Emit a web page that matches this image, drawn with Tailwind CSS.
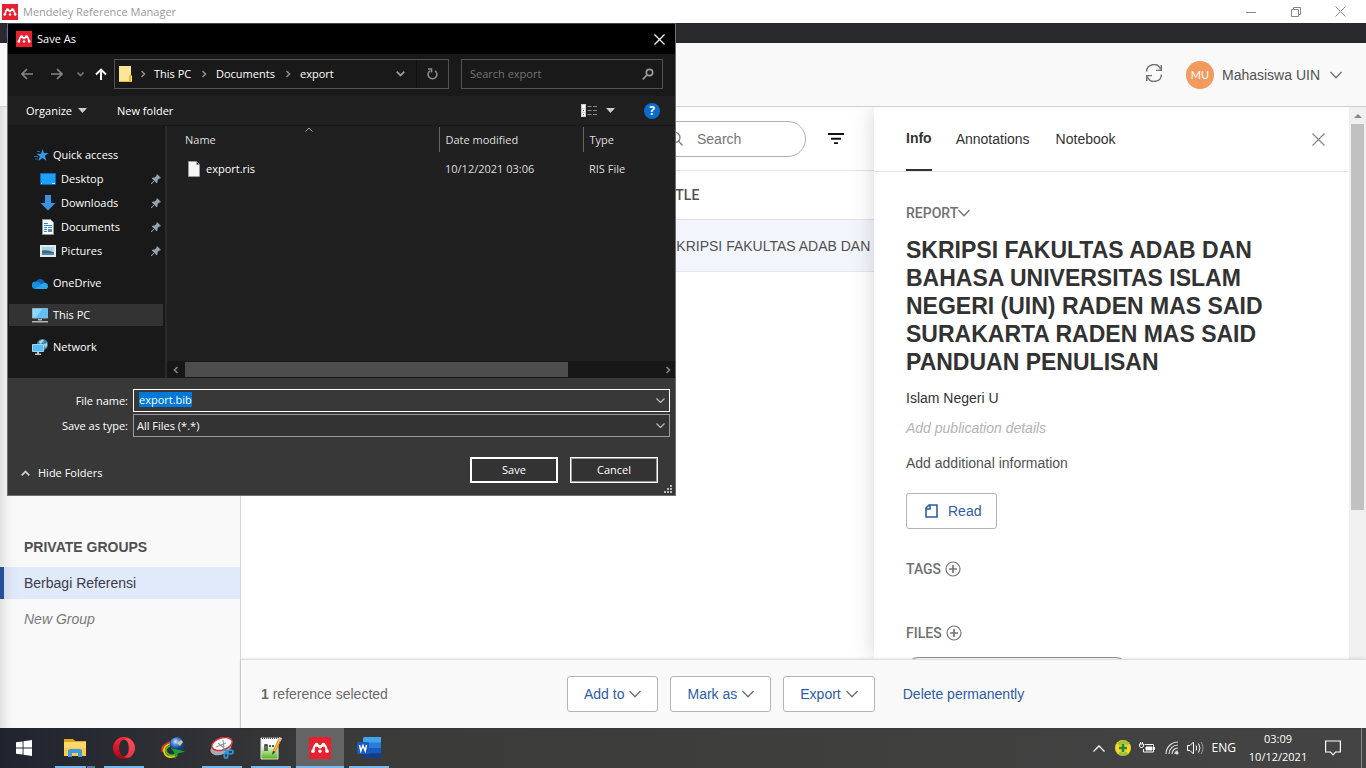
<!DOCTYPE html>
<html lang="en">
<head>
<meta charset="utf-8">
<title>Mendeley Reference Manager</title>
<script src="https://cdn.jsdelivr.net/npm/@tailwindcss/browser@4"></script>
</head>
<body class="relative flex h-screen flex-col overflow-hidden bg-white font-['Liberation_Sans',Arial,sans-serif] text-sm text-[#505050]">

<svg class="hidden" aria-hidden="true">
  <symbol id="mendeley" viewBox="0 0 22 22">
    <path fill="#e9202f" d="M0 0h22v22H0z"/>
    <path fill="none" stroke="#fff" stroke-width="2.200" d="M4.600 13.500Q4.600 8.500 7.500 7.800L11 10l3.500-2.200q2.900.7 2.900 5.700"/>
    <g fill="#fff"><circle cx="7.600" cy="7.700" r="2"/><circle cx="14.400" cy="7.700" r="2"/><circle cx="11" cy="9.700" r="1.700"/><circle cx="3.900" cy="14.300" r="1.800"/><circle cx="11" cy="14.300" r="1.700"/><circle cx="18.100" cy="14.300" r="1.800"/></g>
  </symbol>
  <symbol id="chev" viewBox="0 0 12 8"><path fill="none" stroke="currentColor" stroke-width="1.300" d="M.5 1 6 6.800 11.500 1"/></symbol>
  <symbol id="crumb" viewBox="0 0 6 8"><path fill="none" stroke="currentColor" stroke-width="1.600" d="M1.500 1 4.500 4l-3 3"/></symbol>
  <symbol id="pin" viewBox="0 0 10 10"><path fill="#95a1ab" d="M6 0l4 4-1.200.6-.6-.2-1.700 1.800.1 2-1 1L3.400 7 .8 10H0v-.8L3 6.600.8 4.400l1-1 2 .1 1.800-1.700-.2-.6z"/></symbol>
  <symbol id="plus" viewBox="0 0 16 16"><g fill="none" stroke="#757575" stroke-width="1.200"><circle cx="8" cy="8" r="7"/><path stroke-width="1.700" d="M8 4v8M4 8h8"/></g></symbol>
</svg>

<!-- window title bar -->
<header class="flex h-[23px] shrink-0 items-center bg-white font-['Open_Sans',sans-serif] text-[11px] text-[#999]">
  <svg class="ml-0.5 size-4"><use href="#mendeley"/></svg>
  <span class="ml-[5px] grow">Mendeley Reference Manager</span>
  <button class="flex w-[45px] justify-center" aria-label="Minimize"><svg width="10" height="10"><path stroke="#888" d="M0 5.500h10"/></svg></button>
  <button class="flex w-[45px] justify-center" aria-label="Restore"><svg width="10" height="10" fill="none" stroke="#888"><path d="M.5 2.500h7v7h-7zM2.500 2.500v-2h7v7h-2"/></svg></button>
  <button class="mr-[3px] flex w-[45px] justify-center" aria-label="Close"><svg width="11" height="11"><path stroke="#888" d="M.5.5l10 10M10.500.5l-10 10"/></svg></button>
</header>
<div class="flex h-5 shrink-0 bg-[#292a2e] pt-[5px] pl-1.5"><i class="block h-[9px] w-1 bg-[#2b2d94]"></i></div>

<!-- account bar -->
<div class="flex h-16 shrink-0 items-center justify-end border-b border-[#cfcfcf] bg-[#f9f9f9] pr-6">
  <button class="mr-[23px] mb-1" aria-label="Sync"><svg width="18" height="18" viewBox="0 0 18 18"><g fill="none" stroke="#6f7277" stroke-width="1.400"><path d="M1.500 7.500A7.300 7.300 0 0 1 15.500 5M16.500 10.500A7.300 7.300 0 0 1 2.500 13"/></g><path fill="#6f7277" d="M17 1v6h-6v-1.300h4.500V1zM1 17v-6h6v1.300H2.500V17z"/></svg></button>
  <button class="flex items-center">
    <span class="flex size-7 items-center justify-center rounded-full bg-[#f29a5e] font-['Lato',sans-serif] text-[11px] text-white">MU</span>
    <span class="ml-2">Mahasiswa UIN</span>
    <svg class="ml-2.5 h-2 w-3 text-[#707070]"><use href="#chev"/></svg>
  </button>
</div>

<main class="flex min-h-0 flex-1">
  <!-- library sidebar -->
  <nav class="flex w-[241px] shrink-0 flex-col justify-end border-r border-[#d6d6d6] bg-[#f9f9f9] pb-[99px] shadow-[inset_14px_0_14px_-12px_rgba(0,0,0,0.16)]">
    <h2 class="pl-6 leading-5 font-bold">PRIVATE GROUPS</h2>
    <a href="#berbagi" class="mt-2.5 flex h-8 items-center border-l-4 border-[#254f98] bg-[#e0eafa] pl-5 text-[#3c3c46] shadow-[inset_14px_0_14px_-12px_rgba(0,0,0,0.1)]">Berbagi Referensi</a>
    <a href="#new" class="mt-2.5 pl-6 leading-5 text-[#7a7a7a] italic">New Group</a>
  </nav>

  <div class="flex min-w-0 flex-1 flex-col">
    <div class="flex min-h-0 flex-1 overflow-hidden">
      <!-- reference list -->
      <section class="min-w-0 flex-1 overflow-hidden">
        <div class="flex h-[63px] items-center justify-end pr-[30px]">
          <label class="flex h-9 w-[150px] items-center rounded-full border border-[#b0b0b0] pl-3">
            <svg class="shrink-0" width="14" height="14" fill="none" stroke="#757575" stroke-width="1.200"><circle cx="6" cy="5.500" r="5"/><path d="M9.500 9l4 4.500"/></svg>
            <input type="text" aria-label="Search" placeholder="Search" class="ml-3.5 w-24 outline-none placeholder:text-[#757575]">
          </label>
          <button class="ml-[22px]" aria-label="Filter"><svg width="16" height="11"><path fill="#111" d="M0 0h16v2H0zM3 4.700h10v2H3zM6 9.300h4v1.700H6z"/></svg></button>
        </div>
        <table class="w-full table-fixed text-left whitespace-nowrap">
          <thead><tr class="h-[49px] border-y border-[#e3e3e3] font-['Roboto',sans-serif]"><th class="w-[422px]"></th><th class="font-medium">TITLE</th></tr></thead>
          <tbody><tr class="h-[52px] border-b border-[#e3e6ec] bg-[#f2f6fc]"><td></td><td class="overflow-hidden pl-1">SKRIPSI FAKULTAS ADAB DAN</td></tr></tbody>
        </table>
      </section>

      <!-- details panel -->
      <aside class="flex w-[475px] shrink-0 flex-col bg-white shadow-[0_0_22px_rgba(0,0,0,0.16)]">
        <div class="flex h-[65px] shrink-0 items-start border-b border-[#e6e6e6] pr-6 pl-8 text-[#323232]">
          <button class="h-16 border-b-2 border-[#323232] font-bold">Info</button>
          <button class="ml-6 h-16">Annotations</button>
          <button class="ml-[26px] h-16">Notebook</button>
          <button class="ml-auto h-16" aria-label="Close panel"><svg width="13" height="13"><path stroke="#888" stroke-width="1.300" d="M.5.5l12 12M12.500.5l-12 12"/></svg></button>
        </div>
        <div class="flex flex-col items-start pt-[31px] pr-8 pl-8">
          <button class="flex items-center font-['Roboto',sans-serif] leading-5 font-medium text-[#707070]">REPORT<svg class="h-2 w-3"><use href="#chev"/></svg></button>
          <h1 class="mt-[13px] pr-3 text-[23px] leading-7 font-bold text-[#323232]">SKRIPSI FAKULTAS ADAB DAN BAHASA UNIVERSITAS ISLAM NEGERI (UIN) RADEN MAS SAID SURAKARTA RADEN MAS SAID PANDUAN PENULISAN</h1>
          <p class="mt-3 leading-5 text-[#323232]">Islam Negeri U</p>
          <button class="mt-2.5 leading-5 text-[#b3b3b3] italic">Add publication details</button>
          <button class="mt-[15px] leading-5">Add additional information</button>
          <button class="mt-5 flex h-9 items-center rounded-[3px] border border-[#b5b5b5] px-[15px] text-[#2e5ca8]"><svg class="mr-2.5 ml-[3px]" width="13" height="14" fill="none" stroke="#2e5ca8" stroke-width="1.600"><path d="M4 1H12v12H1V4zM5 1v4H1"/></svg>Read</button>
          <button class="mt-[30px] flex items-center gap-1 font-['Roboto',sans-serif] leading-5 font-medium text-[#707070]">TAGS <svg class="size-4"><use href="#plus"/></svg></button>
          <button class="mt-11 flex items-center gap-1 font-['Roboto',sans-serif] leading-5 font-medium text-[#707070]">FILES <svg class="size-4"><use href="#plus"/></svg></button>
          <div class="mt-3.5 h-8 w-[222px] rounded-xl border border-[#8f8f8f]"></div>
        </div>
      </aside>
      <div class="flex w-[17px] shrink-0 flex-col items-center bg-[#f0f0f0] pt-[7px]">
        <svg width="8" height="4"><path fill="#8a8a8a" d="M4 0l4 4H0z"/></svg>
        <div class="mt-1.5 h-[386px] w-[13px] bg-[#c1c1c1]"></div>
      </div>
    </div>

    <!-- selection actions -->
    <footer class="relative flex h-[69px] shrink-0 items-center border-t border-[#dedede] bg-[#f9f9f9] pl-5 text-[#2e5ca8] shadow-[0_0_3px_rgba(0,0,0,0.15)]">
      <p class="w-[306px] text-[#6b6b6b]"><b>1</b> reference selected</p>
      <button class="flex h-9 items-center gap-[5px] rounded-[3px] border border-[#b5b5b5] bg-white px-4">Add to<svg class="h-2 w-3 text-[#707070]"><use href="#chev"/></svg></button>
      <button class="ml-3 flex h-9 items-center gap-[5px] rounded-[3px] border border-[#b5b5b5] bg-white px-4">Mark as<svg class="h-2 w-3 text-[#707070]"><use href="#chev"/></svg></button>
      <button class="ml-3 flex h-9 items-center gap-[5px] rounded-[3px] border border-[#b5b5b5] bg-white px-4">Export<svg class="h-2 w-3 text-[#707070]"><use href="#chev"/></svg></button>
      <button class="ml-7">Delete permanently</button>
    </footer>
  </div>
</main>

<!-- Windows taskbar -->
<div class="flex h-10 shrink-0 items-stretch gap-px bg-linear-to-r from-[#20242f] via-[#3a3a39] via-25% to-[#444] font-['Open_Sans',sans-serif] text-[11px] text-white">
  <button class="mr-0.5 flex w-12 items-center justify-center" aria-label="Start"><svg width="16" height="16" fill="#fff"><path d="M0 2.300l6.600-.9v6.200H0zM7.500 1.200 16 0v7.600H7.500zM0 8.400h6.600v6.200L0 13.700zM7.500 8.400H16V16l-8.500-1.200z"/></svg></button>
  <button class="relative flex w-12 items-center justify-center" aria-label="File Explorer">
    <svg width="22" height="18"><path fill="#e5a51c" d="M0 0h9l2 2h11v5H0z"/><path fill="#ffd76a" d="M0 3h22v14H0z"/><path fill="#ffcb4f" d="M0 9h22v8H0z"/><path fill="#3b9ce4" d="M4 11l2-1h10l2 1v7h-4v-4H8v4H4z"/></svg>
    <i class="absolute right-[13px] bottom-0 left-1 h-0.5 bg-[#76b9ed]"></i><i class="absolute right-1 bottom-0 h-0.5 w-2 bg-[#567c9b]"></i></button>
  <button class="relative flex w-12 items-center justify-center" aria-label="Opera">
    <svg width="22" height="22"><defs><linearGradient id="op" x2="0" y2="1"><stop stop-color="#ff2b3c"/><stop offset="1" stop-color="#b10015"/></linearGradient></defs><path fill="url(#op)" fill-rule="evenodd" d="M11 0a11 11 0 1 1 0 22 11 11 0 0 1 0-22zm0 2.500C8 2.500 6.200 6.500 6.200 11s1.800 8.500 4.800 8.500 4.800-4 4.800-8.500S14 2.500 11 2.500z"/><path fill="#ff6a6a" d="M11 2.500c2-2 5-1.600 7 .2 5.500 5 5.300 12.500 0 16.700-2 1.800-5 2-7 .1 3 0 4.800-4 4.800-8.500S14 2.500 11 2.500z" opacity=".55"/></svg>
    <i class="absolute inset-x-1 bottom-0 h-0.5 bg-[#76b9ed]"></i></button>
  <button class="flex w-12 items-center justify-center" aria-label="Download Manager">
    <svg width="24" height="22"><defs><radialGradient id="gl" cx=".4" cy=".3"><stop stop-color="#d5ecff"/><stop offset=".4" stop-color="#5794e8"/><stop offset="1" stop-color="#153b8b"/></radialGradient></defs><g fill="none" stroke-width="1.800"><path stroke="#e8322a" d="M10 5C2 7 0 11 1.500 15"/><path stroke="#ffc800" d="M10 6.500C3 8.500 1.500 13 4 17s8 4 12 1"/><path stroke="#3fc62c" d="M10 8.500C5 10 3.500 13 6 16s6 3 9 1"/></g><circle cx="16" cy="7.500" r="7.300" fill="url(#gl)"/><path fill="#d2cf74" d="M16 6l4-3 2 2-3 4z"/><path fill="#19a52b" d="M10 11l14 3.500-7 2-3 5.500-.5-6z"/></svg></button>
  <button class="relative flex w-12 items-center justify-center" aria-label="Snipping Tool">
    <svg width="24" height="22"><ellipse cx="11" cy="11" rx="11" ry="6.500" fill="#a9adb2" transform="rotate(-22 11 11)"/><ellipse cx="12" cy="7" rx="10.500" ry="6" fill="#fff" stroke="#d6323a" stroke-width="1.500" transform="rotate(-18 12 7)"/><path fill="none" stroke="#8f969c" stroke-width="1.100" d="M13 3l1 8M6 10l10-4M8 6l7 6"/><g fill="none" stroke="#2d93d2" stroke-width="1.800"><ellipse cx="20.500" cy="15" rx="2.600" ry="1.800"/><ellipse cx="16" cy="18.500" rx="1.800" ry="2.600"/><path d="M13 12l5 3"/></g></svg>
    <i class="absolute inset-x-1 bottom-0 h-0.5 bg-[#76b9ed]"></i></button>
  <button class="relative flex w-12 items-center justify-center" aria-label="Notepad++">
    <svg width="22" height="24"><defs><linearGradient id="np" x2="0" y2="1"><stop offset=".35" stop-color="#fafafa"/><stop offset="1" stop-color="#4fb60a"/></linearGradient></defs><path fill="url(#np)" stroke="#ddd" d="M1 2h17v21H1z"/><path stroke="#555" stroke-dasharray="1 1" stroke-width="2" d="M2 2h15"/><path fill="none" stroke="#222" stroke-width="1.300" d="M5 15V9h2v6M9 10h2M12 10h2"/><path stroke="#d98b1c" stroke-width="3" d="M20 3l-6 13"/><path stroke="#ffd75a" d="M19.500 4l-5 11"/><path fill="#e5bcbc" d="M19 1l3 1-1 3-3-1z"/><path fill="#222" d="M13 15l2 1-3 3z"/></svg>
    <i class="absolute inset-x-1 bottom-0 h-0.5 bg-[#76b9ed]"></i></button>
  <button class="relative flex w-12 items-center justify-center bg-[#646464]" aria-label="Mendeley">
    <svg class="size-[22px]"><use href="#mendeley"/></svg>
    <i class="absolute inset-x-0 bottom-0 h-0.5 bg-[#76b9ed]"></i></button>
  <button class="relative flex w-12 items-center justify-center" aria-label="Word">
    <svg width="24" height="22"><path fill="#41a5ee" d="M6 1.500Q6 0 7.500 0H24v6H6z"/><path fill="#2b7cd3" d="M6 5.500h18V11H6z"/><path fill="#185abd" d="M6 11h18v5.500H6z"/><path fill="#103f91" d="M6 16.500h18V21H7q-1 0-1-1z"/><rect y="5" width="12" height="12" rx="1" fill="#185abd"/><path fill="none" stroke="#fff" stroke-width="1.400" d="M2.500 8l1.300 6L6 8.500 8.200 14l1.300-6"/></svg>
    <i class="absolute inset-x-1 bottom-0 h-0.5 bg-[#76b9ed]"></i></button>

  <div class="ml-auto flex items-center">
    <svg width="12" height="7" fill="none" stroke="#fff" stroke-width="1.300"><path d="M.5 6.500 6 1l5.500 5.500"/></svg>
    <svg class="ml-2.5" width="16" height="16"><circle cx="8" cy="8" r="8" fill="#f7d52b"/><path fill="#46b14c" d="M2 3.500A8 8 0 0 1 14.500 3.500L12 5.500a5 5 0 0 0-7 0zM3 14.500 5 11.500a5 5 0 0 0 6 0l2 2.500a8 8 0 0 1-10 .5z" opacity=".5"/><path stroke="#1f8a3a" stroke-width="2.600" d="M8 4v8M4 8h8"/></svg>
    <svg class="ml-2" width="16" height="12" fill="none" stroke="#fff"><path d="M5.500 2.500h9v7.500h-10V7M1.500 0v2M3.500 0v2M.5 2h4v2L3.500 5.500h-2L.5 4z"/><path fill="#fff" d="M7 5h6v3H7zM15 5.500h1v2h-1z"/></svg>
    <svg class="ml-2.5" width="14" height="14" fill="none" stroke="#ddd" stroke-width="1.200"><path d="M1 13A12 12 0 0 1 13 1M4 13a9 9 0 0 1 9-9M7 13a6 6 0 0 1 6-6M10 13a3 3 0 0 1 3-3"/><circle cx="12" cy="12" r="1" fill="#fff"/></svg>
    <svg class="ml-2" width="17" height="14" fill="none" stroke="#fff"><path d="M.5 4.500H3L6.500 1v12L3 9.500H.5zM9 4.500q1.500 2.500 0 5M11.500 2.500q3 4.500 0 9"/><path stroke="#999" d="M14 1q4 6 0 12"/></svg>
    <span class="ml-2 text-xs">ENG</span>
    <time class="ml-3 w-[60px] text-center leading-[18px] whitespace-nowrap">03:09<br>10/12/2021</time>
    <svg class="ml-[17px]" width="16" height="16" fill="none" stroke="#fff" stroke-width="1.200"><path d="M.6 1h14.800v11h-4.900L8 14.800 5.500 12H.6z"/></svg>
    <i class="mr-1 ml-5 h-10 w-px bg-[#8a8a8a]"></i>
  </div>
</div>

<!-- Save As window floating above the app -->
<form role="dialog" aria-label="Save As" class="absolute top-[23px] left-[7px] flex w-[669px] flex-col border border-[#6e6e6e] border-t-[#434343] bg-[#383838] font-['Open_Sans',sans-serif] text-[11px] text-white" onsubmit="return false">
  <div class="flex h-[30px] items-center bg-black pr-2.5 pl-2">
    <svg class="size-4"><use href="#mendeley"/></svg>
    <span class="ml-[5px] grow">Save As</span>
    <button type="button" aria-label="Close"><svg width="11" height="11"><path stroke="#fff" stroke-width="1.200" d="M.5.5l10 10M10.500.5l-10 10"/></svg></button>
  </div>

  <div class="flex h-[42px] items-center bg-[#191919] pr-3 pb-0.5 pl-[13px]">
    <button type="button" aria-label="Back"><svg width="12" height="12" fill="none" stroke="#858585" stroke-width="1.700"><path d="M12 6H1M6 1 1 6l5 5"/></svg></button>
    <button type="button" class="ml-[18px]" aria-label="Forward"><svg width="12" height="12" fill="none" stroke="#858585" stroke-width="1.700"><path d="M0 6h11M6 1l5 5-5 5"/></svg></button>
    <button type="button" class="ml-3.5" aria-label="Recent"><svg width="7" height="5" fill="none" stroke="#757575" stroke-width="1.600"><path d="M.5.5l3 3 3-3"/></svg></button>
    <button type="button" class="ml-[11px]" aria-label="Up"><svg width="12" height="12" fill="none" stroke="#fff" stroke-width="1.900"><path d="M6 12V1.500M1 6.500l5-5 5 5"/></svg></button>
    <div class="ml-[7px] flex h-[30px] w-[335px] items-center border border-[#535353] pl-1">
      <svg width="13" height="16"><path fill="#ffe695" d="M0 0h12v9l1 1v6H0z"/><path fill="#e6b93a" d="M10 10l2-2v8h-2zM0 15h13v1H0z"/></svg>
      <svg class="ml-2 h-2 w-1.5 text-[#8a8a8a]"><use href="#crumb"/></svg><span class="ml-2 w-10">This PC</span>
      <svg class="ml-[7px] h-2 w-1.5 text-[#8a8a8a]"><use href="#crumb"/></svg><span class="ml-[9px] w-[62px]">Documents</span>
      <svg class="ml-[7px] h-2 w-1.5 text-[#8a8a8a]"><use href="#crumb"/></svg><span class="ml-[9px]">export</span>
      <svg class="ml-auto" width="9" height="6" fill="none" stroke="#999" stroke-width="1.800"><path d="M.7.7 4.500 4.500 8.300.7"/></svg>
      <button type="button" class="ml-[11px] flex h-7 w-8 items-center justify-center border-l border-[#111]" aria-label="Refresh"><svg width="11" height="12" fill="none" stroke="#8c8c8c" stroke-width="1.600"><path d="M8 2.800A4.400 4.400 0 1 1 3 2.800M1 1h3.500v3.500"/></svg></button>
    </div>
    <label class="ml-3 flex h-[30px] w-[202px] items-center border border-[#535353] pr-2 pl-2">
      <input type="text" aria-label="Search export" placeholder="Search export" class="w-0 grow outline-none placeholder:text-[#747474]">
      <svg width="12" height="12" fill="none" stroke="#999" stroke-width="1.700"><circle cx="7.500" cy="4.500" r="3.200"/><path d="M5 7 .7 11.300"/></svg>
    </label>
  </div>

  <div class="flex h-[30px] items-center border-b border-[#181818] bg-[#202020] pr-[15px] pl-[18px]">
    <button type="button" class="flex items-center">Organize<svg class="ml-1.5" width="9" height="5"><path fill="#ccc" d="M0 0h9L4.500 5z"/></svg></button>
    <button type="button" class="ml-[30px]">New folder</button>
    <button type="button" class="ml-auto flex items-center" aria-label="Change view"><svg width="16" height="13"><path fill="#ccc" d="M0 0h5v13H0z"/><path fill="#fff" d="M1 1h3v3H1zM1 5h3v3H1zM1 9h3v3H1z"/><path fill="#4274b8" d="M2 6h1v1H2z"/><path fill="#c33" d="M2 10h1v1H2z"/><path stroke="#888" d="M6.500 2.500h4M12 2.500h4M6.500 6.500h4M12 6.500h4M6.500 10.500h4M12 10.500h4"/></svg><svg class="ml-[9px]" width="9" height="5"><path fill="#ccc" d="M0 0h9L4.500 5z"/></svg></button>
    <button type="button" class="ml-[29px] size-4 rounded-full bg-[#0a6ccb] text-center text-xs leading-4 font-bold" aria-label="Help">?</button>
  </div>

  <div class="flex h-[252px]">
    <ul class="w-[157px] shrink-0 bg-[#191919] pt-[17px]">
      <li class="flex h-6 items-center pl-[26px]"><svg width="15" height="13"><path fill="#2f9be8" d="M8.500 0l1.400 4h4.600l-3.600 2.800 1.600 5L8.500 9l-4.200 3 1.500-4.700L2.500 4.800H7z"/><path stroke="#1b6fae" d="M0 7.500h4M1 10h3M3 2.500h3"/></svg><span class="ml-1">Quick access</span></li>
      <li class="flex h-6 items-center pr-1 pl-8"><svg width="16" height="12"><path fill="#1ea0f9" stroke="#0a6bc4" d="M.5.5h15v11H.5z"/><path stroke="#d4eaff" d="M1 10.500h1M12 10.500h3"/></svg><span class="ml-[5px] grow">Desktop</span><svg class="size-2.5"><use href="#pin"/></svg></li>
      <li class="flex h-6 items-center pr-1 pl-8"><svg width="16" height="16"><path fill="#3b92e4" d="M5 0h6v8h4.500L8 15.500.5 8H5z"/></svg><span class="ml-[5px] grow">Downloads</span><svg class="size-2.5"><use href="#pin"/></svg></li>
      <li class="flex h-6 items-center pr-1 pl-8"><svg width="16" height="16"><path fill="#fff" stroke="#8d9499" d="M2.500.5h8l3 3v12h-11z"/><path stroke="#2a88cf" d="M4 4.500h4M4 6.500h8M4 8.500h3M8 8.500h4M4 10.500h3M4 12.500h3"/><path fill="#5f8aa0" d="M8 10h4v3H8z"/></svg><span class="ml-[5px] grow">Documents</span><svg class="size-2.5"><use href="#pin"/></svg></li>
      <li class="flex h-6 items-center pr-1 pl-8"><svg width="16" height="12"><path fill="#a8d3ef" stroke="#e8e8e8" stroke-width="2" d="M1 1h14v10H1z"/><path fill="#3b6b63" d="M2 5.500q6-1 12 2V10H2z"/><path fill="#4b86b5" d="M2 8h12v2H2z"/></svg><span class="ml-[5px] grow">Pictures</span><svg class="size-2.5"><use href="#pin"/></svg></li>
      <li class="mt-2 flex h-6 items-center pl-6"><svg width="16" height="11"><path fill="#0a64b8" d="M4 4a4.500 4.500 0 0 1 8.500 0L13 7H2z"/><path fill="#1490df" d="M3.500 3.500Q6 3 8 5l5 4-1 2H3.500A3.700 3.700 0 0 1 3.500 3.500z"/><path fill="#28a8ea" d="M3 10.500 10 6q2-2 4-1 2 1 2 3.200A2.800 2.800 0 0 1 13.200 11H4z"/></svg><span class="ml-[5px]">OneDrive</span></li>
      <li class="mt-[9px] mr-0.5 mb-px ml-px flex h-[22px] items-center bg-[#333] pl-[23px]"><svg width="16" height="15"><path fill="#5cc0fb" stroke="#8eb4cc" d="M.5.5h15v9.500H.5z"/><path fill="#8dd6ff" d="M1 1h9L4 9.500H1z"/><path fill="#a9b6be" d="M6 11h4v1.500H6zM0 13h16v1.500H0z"/></svg><span class="ml-[5px]">This PC</span></li>
      <li class="mt-[9px] flex h-6 items-center pl-6"><svg width="16" height="16"><circle cx="10.500" cy="5.500" r="5.500" fill="#3f87ab"/><path fill="#a8d7e8" d="M7 2.500Q10 0 12 1l-2 3-2 1zM12 5l3-1v3l-2 2z"/><path fill="#56bdf8" stroke="#a3d4f0" d="M.5 5.500h11v7H.5z"/><path fill="#b8c5cc" d="M5 13h2v1.500h2V16H3v-1.500h2z"/></svg><span class="ml-[5px]">Network</span></li>
    </ul>
    <div class="flex min-w-0 flex-1 flex-col border-l-2 border-[#2a2a2a] bg-[#202020]">
      <div class="relative grow pt-px">
        <svg class="absolute top-px left-[138px]" width="8" height="5" fill="none" stroke="#aaa"><path d="M.5 4.500 4 1l3.500 3.500"/></svg>
        <table class="w-full table-fixed text-left text-[#dedede]">
          <thead><tr class="h-[25px]"><th class="w-[272px] border-r border-[#636363] pl-[18px] font-normal">Name</th><th class="w-36 border-r border-[#636363] pl-1.5 font-normal">Date modified</th><th class="pl-1.5 font-normal">Type</th></tr></thead>
          <tbody><tr class="h-[34px]"><td class="pl-[21px]"><span class="flex items-center text-white"><svg width="12" height="16"><path fill="#f5f5f5" stroke="#999" d="M.5.5h8l3 3v12H.5zM8.500.5v3h3"/></svg><span class="ml-1.5">export.ris</span></span></td><td class="pl-1.5">10/12/2021 03:06</td><td class="pl-1.5">RIS File</td></tr></tbody>
        </table>
      </div>
      <div class="flex h-[17px] items-center bg-[#171717] pr-1 pl-1.5 text-[#858585]">
        <svg class="h-2 w-1.5 rotate-180"><use href="#crumb"/></svg><div class="ml-1.5 h-[15px] w-[383px] bg-[#4d4d4d]"></div><svg class="ml-auto h-2 w-1.5"><use href="#crumb"/></svg>
      </div>
    </div>
  </div>

  <div class="grid grid-cols-[120px_1fr] items-center gap-x-[5px] gap-y-0.5 pt-[11px] pr-[5px]">
    <label for="fname" class="text-right">File name:</label>
    <div class="relative flex h-[23px] items-center border border-white bg-[#383838]">
      <input id="fname" type="text" value="export.bib" autofocus class="w-full pb-0.5 pl-[5px] outline-none selection:bg-[#0078d7] selection:text-white">
      <svg class="absolute right-1 h-[5px] w-[9px]" fill="none" stroke="#bbb" stroke-width="1.200"><path d="M.5.5l4 4 4-4"/></svg>
    </div>
    <label for="ftype" class="text-right">Save as type:</label>
    <div class="relative flex h-[23px] items-center border border-[#9b9b9b] bg-[#333]">
      <select id="ftype" class="w-full appearance-none pl-[3px] outline-none"><option>All Files (*.*)</option></select>
      <svg class="pointer-events-none absolute right-1 h-[5px] w-[9px]" fill="none" stroke="#bbb" stroke-width="1.200"><path d="M.5.5l4 4 4-4"/></svg>
    </div>
  </div>
  <div class="relative mt-5 flex h-[38px] items-start pr-[17px] pl-[13px]">
    <button type="button" class="mt-2 mr-auto flex items-center"><svg class="mr-2" width="9" height="6" fill="none" stroke="#ccc" stroke-width="1.800"><path d="M.7 5.300 4.500 1.500l3.800 3.800"/></svg>Hide Folders</button>
    <button type="submit" class="h-[26px] w-[88px] border-2 border-white bg-[#333]">Save</button>
    <button type="button" class="ml-3 h-[26px] w-[88px] border border-white bg-[#333] inset-ring inset-ring-[#9b9b9b]">Cancel</button>
    <svg class="absolute right-[3px] bottom-0.5" width="8" height="8" fill="#bbb"><path d="M6 0h2v2H6zM3 3h2v2H3zM6 3h2v2H6zM0 6h2v2H0zM3 6h2v2H3zM6 6h2v2H6z"/></svg>
  </div>
</form>
<script>document.getElementById('fname').focus(); document.getElementById('fname').select();</script>
</body>
</html>
